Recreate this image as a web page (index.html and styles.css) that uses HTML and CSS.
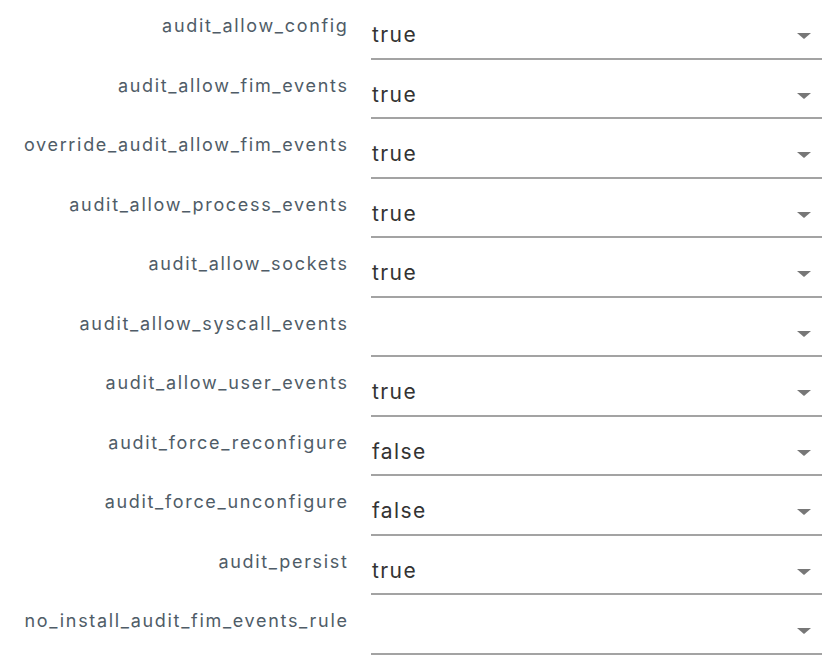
FILE: index.html
```html
<!DOCTYPE html>
<html>
<head>
<meta charset="utf-8">
<link rel="stylesheet" href="styles.css">
</head>
<body>
<div class="form">
  <div class="row"><div class="label">audit_allow_config</div><div class="select"><span class="value">true</span><span class="caret"></span></div></div>
  <div class="row"><div class="label">audit_allow_fim_events</div><div class="select"><span class="value">true</span><span class="caret"></span></div></div>
  <div class="row"><div class="label">override_audit_allow_fim_events</div><div class="select"><span class="value">true</span><span class="caret"></span></div></div>
  <div class="row"><div class="label">audit_allow_process_events</div><div class="select"><span class="value">true</span><span class="caret"></span></div></div>
  <div class="row"><div class="label">audit_allow_sockets</div><div class="select"><span class="value">true</span><span class="caret"></span></div></div>
  <div class="row"><div class="label">audit_allow_syscall_events</div><div class="select"><span class="value"></span><span class="caret"></span></div></div>
  <div class="row"><div class="label">audit_allow_user_events</div><div class="select"><span class="value">true</span><span class="caret"></span></div></div>
  <div class="row"><div class="label">audit_force_reconfigure</div><div class="select"><span class="value">false</span><span class="caret"></span></div></div>
  <div class="row"><div class="label">audit_force_unconfigure</div><div class="select"><span class="value">false</span><span class="caret"></span></div></div>
  <div class="row"><div class="label">audit_persist</div><div class="select"><span class="value">true</span><span class="caret"></span></div></div>
  <div class="row"><div class="label">no_install_audit_fim_events_rule</div><div class="select"><span class="value"></span><span class="caret"></span></div></div>
</div>
</body>
</html>
```
FILE: styles.css
```css
html, body {
  margin: 0;
  padding: 0;
  background: #ffffff;
}
body {
  font-family: Inter, "Liberation Sans", sans-serif;
}
.form {
  display: flex;
  flex-direction: column;
}
.row {
  display: grid;
  grid-template-columns: 348.6px 451px;
  column-gap: 22.4px;
  height: 59.5px;
}
.label {
  text-align: right;
  font-size: 18px;
  line-height: 24px;
  letter-spacing: 1.68px;
  padding-top: 14px;
  color: #4f5c67;
  white-space: nowrap;
}
.select {
  display: flex;
  justify-content: space-between;
  align-items: flex-start;
  border-bottom: 2px solid #a3a3a3;
  box-sizing: border-box;
  height: 59.5px;
  padding: 21px 11px 0 1px;
}
.value {
  font-size: 21px;
  line-height: 28px;
  letter-spacing: 1.4px;
  color: #333333;
  min-height: 28px;
}
.caret {
  width: 0;
  height: 0;
  margin-top: 12px;
  border-left: 7px solid transparent;
  border-right: 7px solid transparent;
  border-top: 6px solid #777777;
}
```
